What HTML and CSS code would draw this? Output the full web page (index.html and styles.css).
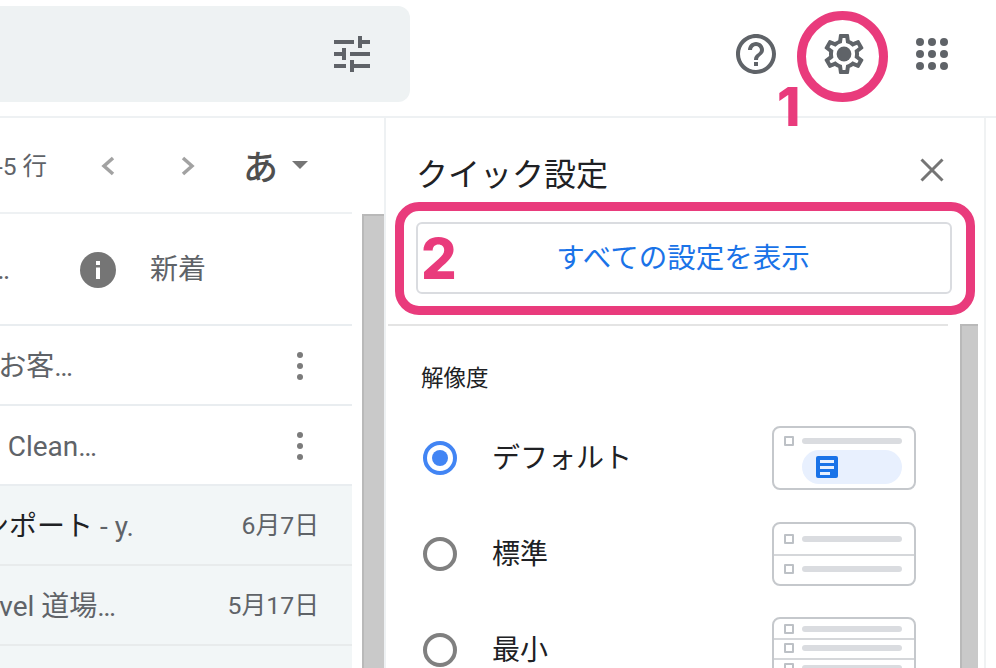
FILE: index.html
```html
<!DOCTYPE html>
<html lang="ja">
<head>
<meta charset="utf-8">
<title>クイック設定</title>
<link rel="stylesheet" href="styles.css">
</head>
<body>
<div class="app">
  <header class="topbar">
    <div class="search">
      <svg class="icon48" viewBox="0 0 24 24"><path d="M3 17v2h6v-2H3zM3 5v2h10V5H3zm10 16v-2h8v-2h-8v-2h-2v6h2zM7 9v2H3v2h4v2h2V9H7zm14 4v-2H11v2h10zm-6-4h2V7h4V5h-4V3h-2v6z"/></svg>
    </div>
    <div class="top-actions">
      <svg class="icon48" viewBox="0 0 24 24"><path d="M11 18h2v-2h-2v2zm1-16C6.48 2 2 6.48 2 12s4.48 10 10 10 10-4.48 10-10S17.52 2 12 2zm0 18c-4.41 0-8-3.59-8-8s3.59-8 8-8 8 3.59 8 8-3.59 8-8 8zm0-14c-2.21 0-4 1.79-4 4h2c0-1.1.9-2 2-2s2 .9 2 2c0 2-3 1.75-3 5h2c0-2.25 3-2.5 3-5 0-2.21-1.79-4-4-4z"/></svg>
      <svg class="icon48" viewBox="0 0 24 24"><path d="M19.43 12.98c.04-.32.07-.64.07-.98 0-.34-.03-.66-.07-.98l2.11-1.65c.19-.15.24-.42.12-.64l-2-3.46c-.09-.16-.26-.25-.44-.25-.06 0-.12.01-.17.03l-2.49 1c-.52-.4-1.08-.73-1.69-.98l-.38-2.65C14.46 2.18 14.25 2 14 2h-4c-.25 0-.46.18-.49.42l-.38 2.65c-.61.25-1.17.59-1.69.98l-2.49-1c-.06-.02-.12-.03-.18-.03-.17 0-.34.09-.43.25l-2 3.46c-.13.22-.07.49.12.64l2.11 1.65c-.04.32-.07.65-.07.98 0 .33.03.66.07.98l-2.11 1.65c-.19.15-.24.42-.12.64l2 3.46c.09.16.26.25.44.25.06 0 .12-.01.17-.03l2.49-1c.52.4 1.08.73 1.69.98l.38 2.65c.03.24.24.42.49.42h4c.25 0 .46-.18.49-.42l.38-2.65c.61-.25 1.17-.59 1.69-.98l2.49 1c.06.02.12.03.18.03.17 0 .34-.09.43-.25l2-3.46c.12-.22.07-.49-.12-.64l-2.11-1.65zm-1.98-1.71c.04.31.05.52.05.73 0 .21-.02.43-.05.73l-.14 1.13.89.7 1.08.84-.7 1.21-1.27-.51-1.04-.42-.9.68c-.43.32-.84.56-1.25.73l-1.06.43-.16 1.13-.2 1.35h-1.4l-.19-1.35-.16-1.13-1.06-.43c-.43-.18-.83-.41-1.23-.71l-.91-.7-1.06.43-1.27.51-.7-1.21 1.08-.84.89-.7-.14-1.13c-.03-.31-.05-.54-.05-.74s.02-.43.05-.73l.14-1.13-.89-.7-1.08-.84.7-1.21 1.27.51 1.04.42.9-.68c.43-.32.84-.56 1.25-.73l1.06-.43.16-1.13.2-1.35h1.39l.19 1.35.16 1.13 1.06.43c.43.18.83.41 1.23.71l.91.7 1.06-.43 1.27-.51.7 1.21-1.07.85-.89.7.14 1.13z"/><circle cx="12" cy="12" r="3.7"/></svg>
      <svg class="icon48 apps" viewBox="0 0 48 48"><circle cx="8" cy="12" r="4"/><circle cx="20" cy="12" r="4"/><circle cx="32" cy="12" r="4"/><circle cx="8" cy="24" r="4"/><circle cx="20" cy="24" r="4"/><circle cx="32" cy="24" r="4"/><circle cx="8" cy="36" r="4"/><circle cx="20" cy="36" r="4"/><circle cx="32" cy="36" r="4"/></svg>
    </div>
  </header>

  <main class="main">
    <section class="mail">
      <div class="mail-col">
        <div class="toolbar">
          <span class="count">1-5 行</span>
          <svg class="chev chev-left" viewBox="0 0 14 20"><path d="M12 2 3 10l9 8"/></svg>
          <svg class="chev chev-right" viewBox="0 0 14 20"><path d="M2 2l9 8-9 8"/></svg>
          <span class="kana">あ</span>
          <span class="caret"></span>
        </div>
        <div class="row row-first">
          <span class="snip snip-a">確認してください…</span>
          <svg class="info" viewBox="0 0 36 36"><circle cx="18" cy="18" r="18"/><rect x="16" y="15.500" width="4" height="11.500"/><rect x="16" y="9" width="4" height="4"/></svg>
          <span class="new">新着</span>
        </div>
        <div class="row">
          <span class="snip snip-d">お客…</span>
          <span class="dots"><i></i><i></i><i></i></span>
        </div>
        <div class="row">
          <span class="snip snip-b">Clean…</span>
          <span class="dots"><i></i><i></i><i></i></span>
        </div>
        <div class="row read">
          <span class="snip snip-c"><span class="clip-start"><b>インポート</b> - y.</span></span>
          <span class="date">6月7日</span>
        </div>
        <div class="row read">
          <span class="snip snip-e">Level 道場…</span>
          <span class="date">5月17日</span>
        </div>
        <div class="row read"></div>
      </div>
      <div class="scroll"></div>
    </section>

    <aside class="panel">
      <div class="panel-col">
        <div class="panel-head">
          <h2 class="panel-title">クイック設定</h2>
          <svg class="close" viewBox="0 0 24 24"><path d="M1.500 1.500l21 21m0-21-21 21"/></svg>
        </div>
        <div class="all-wrap"><button class="all">すべての設定を表示</button></div>
        <div class="panel-body">
          <div class="body-main">
            <div class="section-label">解像度</div>
            <div class="option">
              <span class="radio on"></span>
              <span class="opt-label">デフォルト</span>
              <div class="thumb thumb-default">
                <div class="thumb-line"><i class="cb"></i><i class="bar"></i></div>
                <div class="pill"><span class="doc"><i></i><i></i><i class="short"></i></span></div>
              </div>
            </div>
            <div class="option">
              <span class="radio"></span>
              <span class="opt-label">標準</span>
              <div class="thumb thumb-normal">
                <div class="thumb-line"><i class="cb"></i><i class="bar"></i></div>
                <div class="thumb-line"><i class="cb"></i><i class="bar"></i></div>
              </div>
            </div>
            <div class="option">
              <span class="radio"></span>
              <span class="opt-label">最小</span>
              <div class="thumb thumb-min">
                <div class="thumb-line"><i class="cb"></i><i class="bar"></i></div>
                <div class="thumb-line"><i class="cb"></i><i class="bar"></i></div>
                <div class="thumb-line"><i class="cb"></i><i class="bar"></i></div>
              </div>
            </div>
          </div>
          <div class="scroll scroll-panel"></div>
        </div>
      </div>
    </aside>
  </main>

  <div class="mark-circle"></div>
  <div class="mark-num mark-1">1</div>
  <div class="mark-rect"></div>
  <div class="mark-num mark-2">2</div>
</div>
</body>
</html>
```

FILE: styles.css
```css
* { box-sizing: border-box; }
html, body { margin: 0; padding: 0; background: #fff; }
body {
  font-family: Roboto, "Noto Sans CJK JP", sans-serif;
  color: #5f6368;
  overflow: hidden;
}
.app { position: relative; width: 996px; height: 668px; overflow: hidden; display: flex; flex-direction: column; }

/* top bar */
.topbar { height: 118px; flex: none; border-bottom: 2px solid #eef1f3; display: flex; padding-top: 6px; }
.search {
  width: 410px; height: 96px; background: #eef2f3;
  border-radius: 0 12px 12px 0;
  display: flex; align-items: center; justify-content: flex-end; padding-right: 34px;
}
.icon48 { width: 48px; height: 48px; fill: #5f6368; display: block; flex: none; }
.top-actions { margin-left: 322px; display: flex; gap: 40px; padding-top: 24px; }
.top-actions .apps { margin-left: 4px; }

/* mail list */
.main { flex: 1; display: flex; min-height: 0; }
.mail { width: 386px; flex: none; display: flex; border-right: 2px solid #eef1f3; }
.mail-col { width: 352px; flex: none; margin-right: 10px; overflow: hidden; }
.scroll { width: 22px; flex: none; margin-top: 96px; background: #c9c9c9; border-left: 2px solid #b9b9b9; border-top: 2px solid #b9b9b9; }

.toolbar { height: 96px; border-bottom: 2px solid #eef1f3; display: flex; align-items: center; position: relative; white-space: nowrap; }
.count { position: absolute; right: 305px; font-size: 24.500px; top: 31px; line-height: 36px; }
.chev { width: 14px; height: 20px; fill: none; stroke: #a2a2a2; stroke-width: 3.500px; position: absolute; top: 38px; }
.chev-left { left: 101px; }
.chev-right { left: 181px; }
.kana { position: absolute; left: 243px; top: 28px; font-size: 35px; line-height: 46px; font-weight: 500; color: #4f4f4f; }
.caret { position: absolute; left: 292px; top: 43px; border: 8px solid transparent; border-top-color: #757575; border-bottom: 0; }

.row { height: 80px; padding-top: 4px; border-bottom: 2px solid #e9edf0; display: flex; align-items: center; white-space: nowrap; font-size: 28px; line-height: 40px; }
.row-first { height: 112px; padding-top: 2px; }
.read { background: #f2f6f7; border-bottom-color: #e8ebec; }
.snip { display: flex; justify-content: flex-end; overflow: hidden; flex: none; white-space: pre; }
.snip-a { width: 10px; }
.snip-b { width: 97px; }
.snip-c { width: 133px; justify-content: flex-start; }
.snip-d { width: 73px; }
.snip-e { width: 116px; }
.clip-start { margin-left: -47px; flex: none; }
.snip b { font-weight: 400; color: #202124; }
.info { width: 36px; height: 36px; margin-left: 70px; flex: none; fill: #757575; }
.info rect { fill: #fff; }
.new { margin-left: 34px; }
.dots { margin-left: auto; margin-right: 49px; margin-bottom: 2px; display: flex; flex-direction: column; gap: 5px; }
.dots i { display: block; width: 6px; height: 6px; border-radius: 50%; background: #7b7b7b; }
.date { margin-left: auto; margin-right: 33px; margin-bottom: 2px; font-size: 24.800px; }

/* quick settings */
.panel { width: 600px; flex: none; border-right: 2px solid #f0f2f3; height: 100%; display: flex; }
.panel-col { width: 100%; display: flex; flex-direction: column; }
.panel-head { height: 104px; padding: 31px 40px 0 30px; display: flex; justify-content: space-between; align-items: flex-start; flex: none; }
.panel-title { margin: 0; font-size: 32px; line-height: 52px; font-weight: 400; color: #202124; }
.close { width: 24px; height: 24px; margin-top: 9px; fill: none; stroke: #757575; stroke-width: 3; }
.all-wrap { flex: none; height: 104px; border-bottom: 2px solid #e4e4e4; margin: 0 36px 0 2px; padding: 0 0 0 28px; }
.all {
  display: block; width: 536px; height: 72px; background: #fff;
  border: 2px solid #dadce0; border-radius: 6px;
  font: 400 28.500px/40px Roboto, "Noto Sans CJK JP", sans-serif; color: #1a73e8; padding: 2px 2px 0 0;
}
.panel-body { flex: 1; display: flex; min-height: 0; }
.body-main { width: 574px; flex: none; padding: 34px 0 0 35px; overflow: hidden; }
.scroll-panel { width: 18px; margin-top: -2px; }
.section-label { font-size: 22.500px; line-height: 36px; color: #202124; }
.option { display: flex; align-items: center; height: 96px; }
.section-label + .option { margin-top: 14px; }
.radio { width: 34px; height: 34px; margin-left: 2px; border-radius: 50%; border: 4px solid #808080; flex: none; position: relative; }
.radio.on { border-color: #4285f4; }
.radio.on::after { content: ""; position: absolute; left: 5px; top: 5px; width: 16px; height: 16px; border-radius: 50%; background: #4285f4; }
.opt-label { margin-left: 35px; padding-top: 2px; font-size: 28px; line-height: 40px; color: #202124; }
.thumb { margin-left: auto; margin-right: 44px; width: 144px; height: 64px; border: 2px solid #c5c8cc; border-radius: 8px; display: flex; flex-direction: column; flex: none; overflow: hidden; }
.thumb-line { display: flex; align-items: center; gap: 8px; padding-left: 10px; flex: none; }
.cb { display: block; width: 10px; height: 10px; border: 2px solid #bdc1c6; border-radius: 1px; flex: none; }
.bar { display: block; width: 100px; height: 6px; border-radius: 3px; background: #dadce0; flex: none; }
.thumb-default .thumb-line { height: 22px; padding-top: 4px; }
.pill { margin-left: 28px; width: 100px; height: 34px; border-radius: 17px; background: #e8f0fe; display: flex; align-items: center; padding-left: 14px; }
.doc { width: 22px; height: 22px; background: #1a73e8; border-radius: 2px; display: flex; flex-direction: column; gap: 3px; padding: 4px 4px 0; flex: none; }
.doc i { display: block; height: 3px; background: #e8f0fe; }
.doc .short { width: 10px; }
.thumb-normal .thumb-line { height: 30px; }
.thumb-normal .thumb-line + .thumb-line { border-top: 2px solid #d5d7da; padding-bottom: 2px; }
.thumb-min { align-self: flex-start; margin-top: 15px; }
.thumb-min .thumb-line { height: 19px; }
.thumb-min .thumb-line + .thumb-line { height: 20px; border-top: 2px solid #d5d7da; padding-bottom: 2px; }

/* annotations */
.mark-circle { position: absolute; left: 797px; top: 11px; width: 91px; height: 91px; border: 9px solid #e93b7c; border-radius: 50%; }
.mark-rect { position: absolute; left: 395px; top: 202px; width: 580px; height: 113px; border: 9px solid #e93b7c; border-radius: 24px; }
.mark-num { position: absolute; font-family: Inter, sans-serif; font-weight: 800; color: #e93b7c; font-size: 56px; line-height: 56px; }
.mark-1 { left: 777px; top: 79px; font-size: 53px; }
.mark-2 { left: 421px; top: 231px; }
```
